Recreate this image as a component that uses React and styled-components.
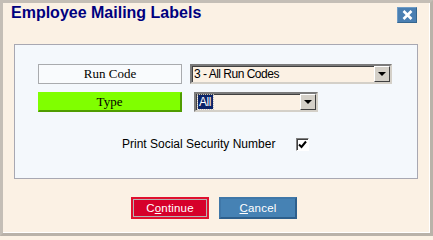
import React from 'react'
import styled, { createGlobalStyle } from 'styled-components'

const Global = createGlobalStyle`
    html, body {
        margin: 0;
        padding: 0;
        background: #fbf1e4;
    }
    * {
        box-sizing: border-box;
    }
`

const Window = styled.div`
    width: 433px;
    height: 236px;
    background: #fbf1e4;
    border: 3px solid #b9b2a9;
    border-top-color: #c4beb6;
    border-left-color: #c4beb6;
    box-shadow: inset -1px -1px 0 #ffffff;
    display: flex;
    flex-direction: column;
    font-family: 'Liberation Sans', Arial, sans-serif;
`

const TitleBar = styled.div`
    height: 41px;
    display: flex;
    justify-content: space-between;
    align-items: flex-start;
    padding: 1px 13px 0 8px;
`

const Title = styled.div`
    font-size: 16px;
    line-height: 18px;
    font-weight: bold;
    color: #00007f;
`

const CloseButton = styled.div`
    width: 20px;
    height: 16px;
    margin-top: 3px;
    background: #4a7fb2;
    border: 1px solid #6f9cc6;
    border-right-color: #35668f;
    border-bottom-color: #35668f;
    display: flex;
    align-items: center;
    justify-content: center;
`

const Panel = styled.div`
    height: 135px;
    margin: 0 12px 0 11px;
    border: 1px solid #a8a8b2;
    background: #f4f8fc;
    padding: 19px 0 0 23px;
    display: flex;
    flex-direction: column;
`

const Row = styled.div`
    display: flex;
    align-items: center;
    gap: ${({ gap }) => gap}px;
    margin-bottom: 8px;
`

const LabelBox = styled.div`
    width: 144px;
    height: 20px;
    display: flex;
    align-items: center;
    justify-content: center;
    font-family: 'Liberation Serif', 'Times New Roman', serif;
    font-size: 13px;
    color: #000;
    background: ${({ active }) => (active ? '#80ff00' : '#f9fbfd')};
    border: 1px solid ${({ active }) => (active ? '#80ff00' : '#a9abae')};
    border-right: ${({ active }) => (active ? '2px solid #4f9c00' : '1px solid #a9abae')};
    border-bottom: ${({ active }) => (active ? '2px solid #4f9c00' : '1px solid #a9abae')};
`

const Combo = styled.div`
    width: ${({ width }) => width}px;
    height: 20px;
    display: flex;
    align-items: stretch;
    background: #fbf1e4;
    border: 2px solid;
    border-color: #7b7b7b #d4d0c8 #d4d0c8 #7b7b7b;
    box-shadow: inset 1px 1px 0 #404040;
`

const ComboText = styled.div`
    flex: 1;
    display: flex;
    align-items: center;
    padding-left: 2px;
    font-size: 12px;
    letter-spacing: -0.5px;
    color: #000;
`

const Selected = styled.span`
    background: #0a246a;
    color: #fff;
    padding: 0 2px 0 1px;
    line-height: 14px;
    outline: 1px dotted #c0c0c0;
`

const ArrowButton = styled.div`
    width: 16px;
    background: #d4d0c8;
    border: 1px solid;
    border-color: #ffffff #404040 #404040 #ffffff;
    display: flex;
    align-items: center;
    justify-content: center;
`

const Arrow = styled.div`
    width: 0;
    height: 0;
    border-left: 4px solid transparent;
    border-right: 4px solid transparent;
    border-top: 4px solid #000;
`

const CheckRow = styled.div`
    display: flex;
    align-items: center;
    margin: 17px 0 0 84px;
    gap: 21px;
    font-size: 12px;
    color: #000;
`

const CheckBox = styled.div`
    width: 13px;
    height: 13px;
    background: #fff;
    border: 1px solid;
    border-color: #808080 #ffffff #ffffff #808080;
    box-shadow: inset 1px 1px 0 #404040;
    display: flex;
    align-items: center;
    justify-content: center;
`

const Footer = styled.div`
    display: flex;
    justify-content: center;
    gap: 10px;
    margin-top: 18px;
    padding-right: 5px;
`

const Button = styled.div`
    width: 78px;
    height: 22px;
    display: flex;
    align-items: center;
    justify-content: center;
    color: #fff;
    font-size: 11.5px;
    letter-spacing: 0.2px;
    background: ${({ primary }) => (primary ? '#d6002a' : '#4682b4')};
    border: 2px solid ${({ primary }) => (primary ? '#e0102e' : '#3f77a8')};
    border-right-color: ${({ primary }) => (primary ? '#e0102e' : '#2d5f8c')};
    border-bottom-color: ${({ primary }) => (primary ? '#e0102e' : '#2d5f8c')};
    box-shadow: ${({ primary }) => (primary ? 'inset 0 0 0 1px #b4b4b4' : 'none')};

    u {
        text-decoration-thickness: 1px;
        text-underline-offset: 1px;
    }
`

export default function App() {
    return (
        <>
            <Global />
            <Window>
                <TitleBar>
                    <Title>Employee Mailing Labels</Title>
                    <CloseButton>
                        <svg width="11" height="10" viewBox="0 0 11 10">
                            <path
                                d="M1.5 1 L9.5 9 M9.5 1 L1.5 9"
                                stroke="#fff"
                                strokeWidth="2.6"
                            />
                        </svg>
                    </CloseButton>
                </TitleBar>
                <Panel>
                    <Row gap={8}>
                        <LabelBox>Run Code</LabelBox>
                        <Combo width={202}>
                            <ComboText>3 - All Run Codes</ComboText>
                            <ArrowButton>
                                <Arrow />
                            </ArrowButton>
                        </Combo>
                    </Row>
                    <Row gap={12}>
                        <LabelBox active>Type</LabelBox>
                        <Combo width={124}>
                            <ComboText>
                                <Selected>All</Selected>
                            </ComboText>
                            <ArrowButton>
                                <Arrow />
                            </ArrowButton>
                        </Combo>
                    </Row>
                    <CheckRow>
                        <span>Print Social Security Number</span>
                        <CheckBox>
                            <svg width="9" height="9" viewBox="0 0 9 9">
                                <path
                                    d="M1 4.5 L3.5 7 L8 1.5"
                                    stroke="#000"
                                    strokeWidth="2"
                                    fill="none"
                                />
                            </svg>
                        </CheckBox>
                    </CheckRow>
                </Panel>
                <Footer>
                    <Button primary>
                        <span>
                            C<u>o</u>ntinue
                        </span>
                    </Button>
                    <Button>
                        <span>
                            <u>C</u>ancel
                        </span>
                    </Button>
                </Footer>
            </Window>
        </>
    )
}
